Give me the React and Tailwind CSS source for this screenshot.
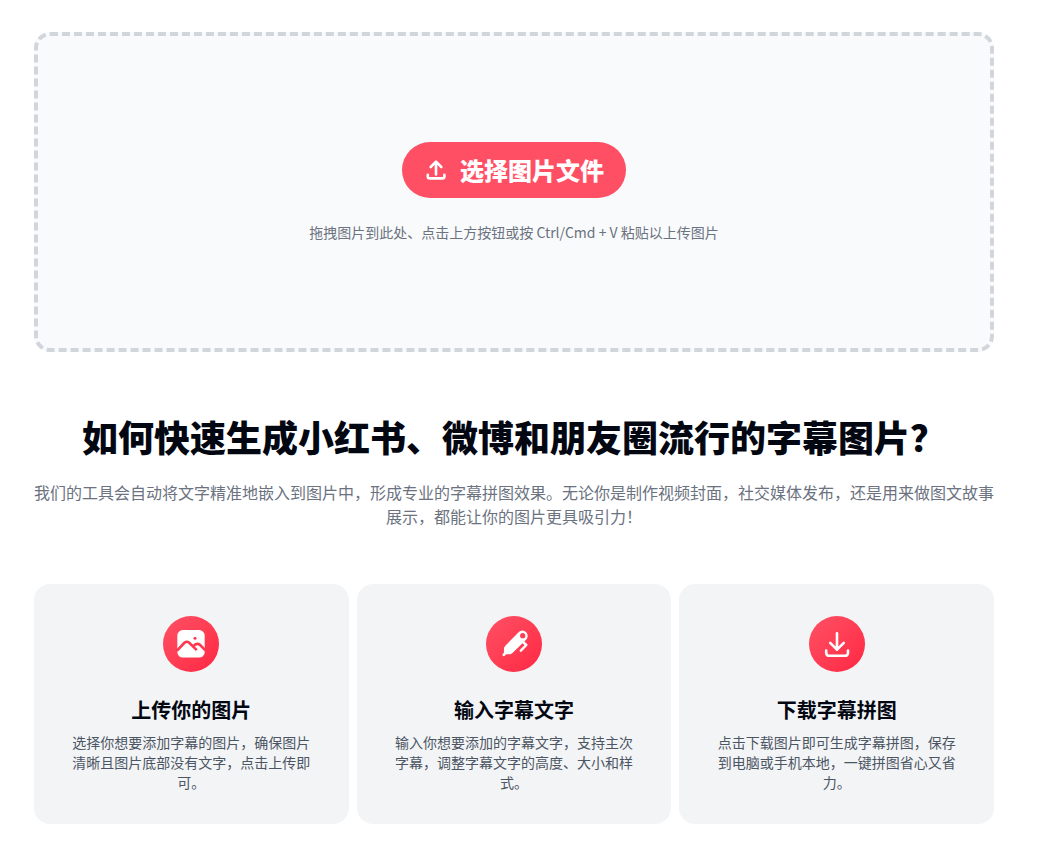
function UploadIcon() {
  return (
    <svg className="size-6" viewBox="0 0 24 24" fill="none" stroke="currentColor" strokeWidth="2.6" strokeLinecap="round" strokeLinejoin="round" aria-hidden="true">
      <path d="M12 16.400V4M6.700 9 12 3.700 17.300 9" />
      <path d="M3.800 16.800v2.100a1.500 1.500 0 0 0 1.500 1.500h13.600a1.500 1.500 0 0 0 1.500-1.500v-2.100" />
    </svg>
  );
}

function PictureIcon() {
  return (
    <svg className="size-8" viewBox="0 0 32 32" fill="none" aria-hidden="true">
      <rect x="2.3" y="2.1" width="27.4" height="27.5" rx="5.5" fill="#fff" />
      <g stroke="#ff3751" strokeWidth="2.600">
        <path d="M1.800 22.800 9.400 14.800Q11.700 12.700 14.200 14.800L21.800 22.100" />
        <path d="M17.600 18.700 20.200 16.600Q22.500 15 24.700 16.600L30.400 22.400" />
      </g>
      <circle cx="20" cy="10.300" r="1.500" fill="#ff3751" />
    </svg>
  );
}

function PenIcon() {
  return (
    <svg className="size-8" viewBox="0 0 32 32" fill="none" aria-hidden="true">
      <path
        fill="#fff"
        fillRule="evenodd"
        d="M6 20.400c0-1 .4-1.800 1.100-2.500L20.600 4.200a5.200 5.200 0 0 1 7.600.100 5.300 5.300 0 0 1-.1 7.500L14.200 25.200c-.8.700-1.500 1-2.500 1l-3.500.1-1.500 1.500c-1.300 1.200-3.100-.6-1.900-1.900l1.100-1.200ZM24.700 5.100a2.600 2.600 0 1 0 0 5.200 2.600 2.600 0 0 0 0-5.200Z"
      />
      <path d="m24.300 13.300 4 3.700-5.500 5.700" stroke="#fff" strokeWidth="2.500" strokeLinecap="round" strokeLinejoin="round" />
    </svg>
  );
}

function DownloadIcon() {
  return (
    <svg className="size-8" viewBox="0 0 32 32" fill="none" stroke="#fff" strokeWidth="2.600" strokeLinecap="round" strokeLinejoin="round" aria-hidden="true">
      <path d="M16 5.200v16.500M9.200 14.900l6.800 6.800 6.800-6.800" />
      <path d="M5.200 22.600v2.400a2.800 2.800 0 0 0 2.800 2.800h16.200a2.800 2.800 0 0 0 2.800-2.800v-2.400" />
    </svg>
  );
}

const steps = [
  { title: "上传你的图片", text: "选择你想要添加字幕的图片，确保图片清晰且图片底部没有文字，点击上传即可。", Icon: PictureIcon },
  { title: "输入字幕文字", text: "输入你想要添加的字幕文字，支持主次字幕，调整字幕文字的高度、大小和样式。", Icon: PenIcon },
  { title: "下载字幕拼图", text: "点击下载图片即可生成字幕拼图，保存到电脑或手机本地，一键拼图省心又省力。", Icon: DownloadIcon },
];

export default function App() {
  return (
    <main lang="zh-CN" className="bg-white pt-8 pr-[47px] pb-6 pl-[34px] font-['Noto_Sans_CJK_SC',sans-serif] text-gray-950">
      <section className="flex h-80 flex-col items-center justify-center gap-6 rounded-2xl border-4 border-dashed border-gray-300 bg-gray-50">
        <button type="button" className="flex h-14 w-56 items-center justify-center gap-3 rounded-full bg-[#ff4f64] text-2xl font-extrabold text-white">
          <UploadIcon />
          选择图片文件
        </button>
        <p className="text-sm text-[#6b7280]">拖拽图片到此处、点击上方按钮或按 Ctrl/Cmd + V 粘贴以上传图片</p>
      </section>

      <section className="pt-16">
        <h2 className="text-center text-4xl font-extrabold text-[#030712]">如何快速生成小红书、微博和朋友圈流行的字幕图片？</h2>
        <p className="mt-6 text-center text-base text-[#6b7280]">
          我们的工具会自动将文字精准地嵌入到图片中，形成专业的字幕拼图效果。无论你是制作视频封面，社交媒体发布，还是用来做图文故事展示，都能让你的图片更具吸引力！
        </p>
        <ul className="mt-14 grid grid-cols-3 gap-2">
          {steps.map(({ title, text, Icon }) => (
            <li key={title} className="flex flex-col items-center rounded-2xl bg-gray-100 p-8 text-center">
              <span className="flex size-14 items-center justify-center rounded-full bg-linear-to-br from-[#ff4f64] to-[#ff2442]">
                <Icon />
              </span>
              <h3 className="mt-6 text-xl font-semibold text-[#030712]">{title}</h3>
              <p className="mt-2 text-sm text-[#4b5563]">{text}</p>
            </li>
          ))}
        </ul>
      </section>
    </main>
  );
}
